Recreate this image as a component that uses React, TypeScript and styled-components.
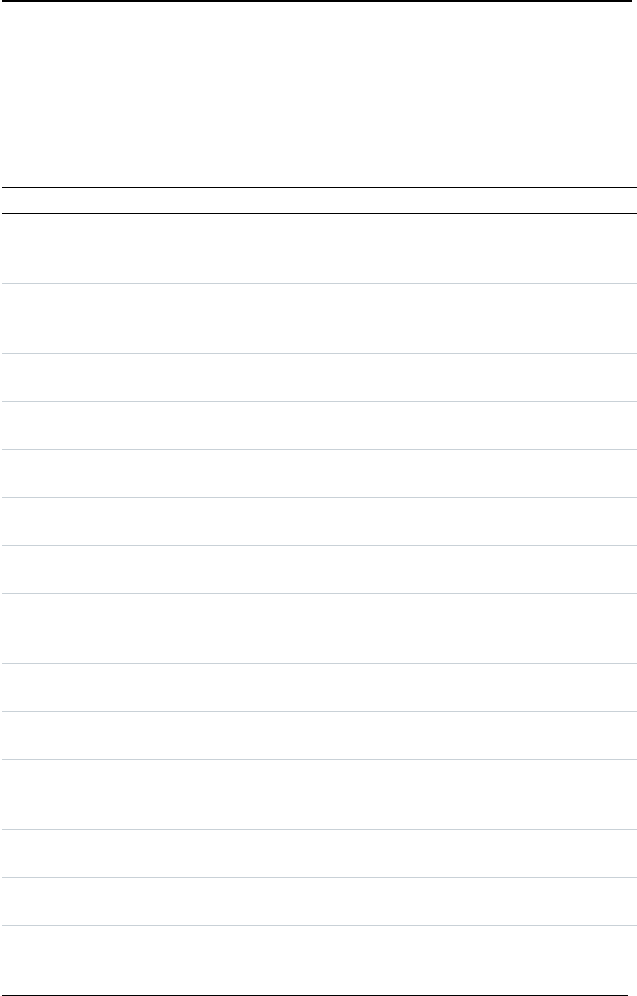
import React from "react";
import styled, { createGlobalStyle } from "styled-components";

const Global = createGlobalStyle`
  html, body { margin: 0; padding: 0; background: #ffffff; overflow: hidden; }
  body { font-family: "Liberation Sans", Arial, sans-serif; color: #ffffff; }
`;

const Page = styled.div`
  display: flex;
  flex-direction: column;
  padding-left: 2px;
  width: 635px;
`;

const Rule = styled.div<{ $w: number; $h: number }>`
  width: ${(p) => p.$w}px;
  height: ${(p) => p.$h}px;
  background: #000000;
  flex: none;
`;

const Masthead = styled.header`
  height: 185px;
`;

const Table = styled.div`
  display: flex;
  flex-direction: column;
  width: 100%;
`;

const HeadRow = styled.div`
  height: 25px;
  border-top: 1px solid #000000;
  border-bottom: 1px solid #000000;
  display: grid;
  grid-template-columns: 2fr 1fr 1fr;
`;

const Row = styled.div<{ $h: number; $last?: boolean }>`
  height: ${(p) => p.$h}px;
  border-bottom: ${(p) => (p.$last ? "none" : "1px solid #c9d1d7")};
  display: grid;
  grid-template-columns: 2fr 1fr 1fr;
`;

const Cell = styled.div`
  font-size: 14px;
`;

const rows = [69, 69, 47, 47, 47, 47, 47, 69, 47, 47, 69, 47, 47, 69];

export default function App() {
  return (
    <>
      <Global />
      <Page>
        <Rule $w={630} $h={2} />
        <Masthead />
        <Table>
          <HeadRow>
            <Cell />
            <Cell />
            <Cell />
          </HeadRow>
          {rows.map((h, i) => (
            <Row key={i} $h={h} $last={i === rows.length - 1}>
              <Cell />
              <Cell />
              <Cell />
            </Row>
          ))}
        </Table>
        <Rule $w={626} $h={2} />
      </Page>
    </>
  );
}
